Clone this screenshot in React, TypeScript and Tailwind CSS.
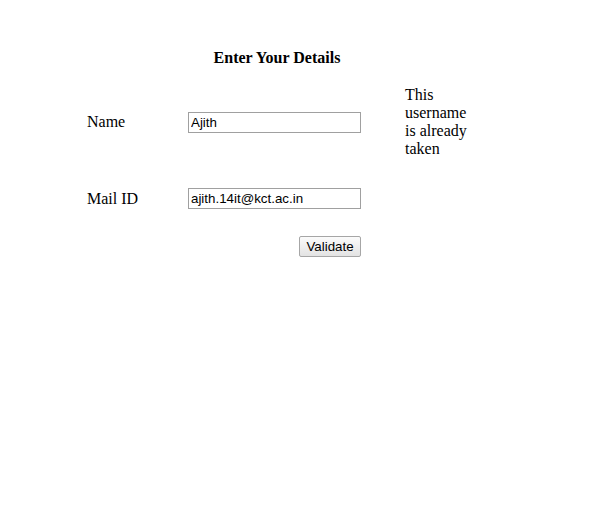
export default function App() {
  return (
    <div className="min-h-[510px] bg-white pl-[87px] pt-[49px] font-['Liberation_Serif',serif] text-[16px] text-black">
      <div className="w-[380px]">
        <h1 className="h-[18px] text-center text-[16px] font-bold leading-[18px]">
          Enter Your Details
        </h1>

        {/* Name row */}
        <div className="mt-[19px] flex h-[72px] items-center">
          <div className="w-[101px] leading-[18px]">Name</div>
          <input
            type="text"
            defaultValue="Ajith"
            className="h-[21px] w-[173px] border border-[#a0a0a0] bg-white px-[2px] font-['Liberation_Sans',sans-serif] text-[13.33px] leading-[17px] outline-none"
          />
          <div className="ml-[44px] w-[62px] leading-[18px]">
            This username is already taken
          </div>
        </div>

        {/* Mail row */}
        <div className="mt-[30px] flex h-[21px] items-center">
          <div className="w-[101px] leading-[18px]">Mail ID</div>
          <input
            type="text"
            defaultValue="ajith.14it@kct.ac.in"
            className="h-[21px] w-[173px] border border-[#a0a0a0] bg-white px-[2px] font-['Liberation_Sans',sans-serif] text-[13.33px] leading-[17px] outline-none"
          />
        </div>

        <div className="mt-[27px] flex w-[274px] justify-end">
          <button
            type="button"
            className="h-[21px] w-[62px] rounded-[2px] border border-[#a6a6a6] bg-gradient-to-b from-[#fbfbfb] to-[#e3e3e3] font-['Liberation_Sans',sans-serif] text-[13.33px] leading-[17px] text-black"
          >
            Validate
          </button>
        </div>
      </div>
    </div>
  );
}
